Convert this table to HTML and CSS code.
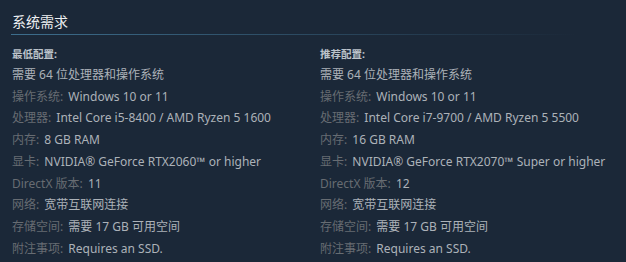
FILE: index.html
```html
<!DOCTYPE html>
<html lang="zh-CN">
<head>
<meta charset="utf-8">
<title>系统需求</title>
<link rel="stylesheet" href="styles.css">
</head>
<body>
<div class="sysreq">
  <h2 class="title">系统需求</h2>
  <div class="cols">
    <div class="col">
      <div class="head">最低配置:</div>
      <ul class="list">
        <li>需要 64 位处理器和操作系统</li>
        <li><span class="k">操作系统:</span> Windows 10 or 11</li>
        <li><span class="k">处理器:</span> Intel Core i5-8400 / AMD Ryzen 5 1600</li>
        <li><span class="k">内存:</span> 8 GB RAM</li>
        <li><span class="k">显卡:</span> NVIDIA® GeForce RTX2060™ or higher</li>
        <li><span class="k">DirectX 版本:</span> 11</li>
        <li><span class="k">网络:</span> 宽带互联网连接</li>
        <li><span class="k">存储空间:</span> 需要 17 GB 可用空间</li>
        <li><span class="k">附注事项:</span> Requires an SSD.</li>
      </ul>
    </div>
    <div class="col">
      <div class="head">推荐配置:</div>
      <ul class="list">
        <li>需要 64 位处理器和操作系统</li>
        <li><span class="k">操作系统:</span> Windows 10 or 11</li>
        <li><span class="k">处理器:</span> Intel Core i7-9700 / AMD Ryzen 5 5500</li>
        <li><span class="k">内存:</span> 16 GB RAM</li>
        <li><span class="k">显卡:</span> NVIDIA® GeForce RTX2070™ Super or higher</li>
        <li><span class="k">DirectX 版本:</span> 12</li>
        <li><span class="k">网络:</span> 宽带互联网连接</li>
        <li><span class="k">存储空间:</span> 需要 17 GB 可用空间</li>
        <li><span class="k">附注事项:</span> Requires an SSD.</li>
      </ul>
    </div>
  </div>
</div>
</body>
</html>
```
FILE: styles.css
```css
html, body {
  margin: 0;
  padding: 0;
  background: #1b2838;
}
body {
  width: 626px;
  height: 262px;
  overflow: hidden;
  font-family: "Noto Sans", "Noto Sans CJK SC", sans-serif;
}
.sysreq {
  padding: 12px 0 0 11px;
}
.title {
  margin: 0;
  padding: 0 0 3px 1px;
  font-size: 14px;
  font-weight: normal;
  line-height: 20px;
  color: #eef0f2;
  background: linear-gradient(to right, #3d6e8d 0%, rgba(61, 110, 141, 0.45) 50%, rgba(61, 110, 141, 0) 92%) no-repeat left bottom / 100% 1px;
}
.cols {
  display: grid;
  grid-template-columns: 308px 1fr;
  padding: 11px 0 0 1px;
}
.head {
  font-size: 10.5px;
  font-weight: bold;
  line-height: 16px;
  color: #bcc3ca;
  margin-bottom: 2px;
}
.list {
  list-style: none;
  margin: 0;
  padding: 0;
  font-size: 12px;
  line-height: 21.7px;
  color: #acb2b8;
  white-space: nowrap;
}
.k {
  color: #676c72;
  margin-right: 2px;
}
```
